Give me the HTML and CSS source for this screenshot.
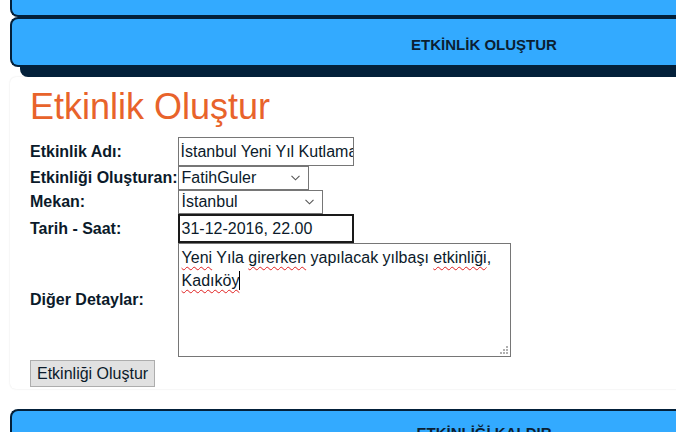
FILE: index.html
```html
<!DOCTYPE html>
<html lang="tr">
<head>
<meta charset="utf-8">
<title>Etkinlik Oluştur</title>
<link rel="stylesheet" href="styles.css">
</head>
<body>
<div class="page">
  <div class="bar bar-top"></div>
  <div class="bar bar-head">ETKİNLİK OLUŞTUR</div>
  <div class="panel">
    <h1 class="title">Etkinlik Oluştur</h1>
    <table class="form">
      <tr>
        <td class="label">Etkinlik Adı:</td>
        <td><div class="field field-name">İstanbul Yeni Yıl Kutlama</div></td>
      </tr>
      <tr>
        <td class="label">Etkinliği Oluşturan:</td>
        <td>
          <div class="select select-user">
            <span>FatihGuler</span>
            <svg class="chev" width="9" height="6" viewBox="0 0 9 6"><path d="M0.5 0.8 L4.5 4.8 L8.5 0.8" fill="none" stroke="#555" stroke-width="1.1"/></svg>
          </div>
        </td>
      </tr>
      <tr>
        <td class="label">Mekan:</td>
        <td>
          <div class="select select-place">
            <span>İstanbul</span>
            <svg class="chev" width="9" height="6" viewBox="0 0 9 6"><path d="M0.5 0.8 L4.5 4.8 L8.5 0.8" fill="none" stroke="#555" stroke-width="1.1"/></svg>
          </div>
        </td>
      </tr>
      <tr>
        <td class="label">Tarih - Saat:</td>
        <td><div class="field field-date">31-12-2016, 22.00</div></td>
      </tr>
      <tr>
        <td class="label">Diğer Detaylar:</td>
        <td>
          <div class="area">
            <div><span class="sp">Yeni</span> Yıla <span class="sp">girerken</span> yapılacak yılbaşı <span class="sp">etkinliği</span>,</div>
            <div><span class="sp">Kadıköy</span><span class="caret"></span></div>
            <svg class="grip" width="8" height="8" viewBox="0 0 8 8"><g fill="#b0b0b0"><rect x="6" y="0" width="2" height="2"/><rect x="3" y="3" width="2" height="2"/><rect x="6" y="3" width="2" height="2"/><rect x="0" y="6" width="2" height="2"/><rect x="3" y="6" width="2" height="2"/><rect x="6" y="6" width="2" height="2"/></g></svg>
          </div>
        </td>
      </tr>
    </table>
    <button class="btn" type="button">Etkinliği Oluştur</button>
  </div>
  <div class="bar bar-next">ETKİNLİĞİ KALDIR</div>
</div>
</body>
</html>
```
FILE: styles.css
```css
html, body {
  margin: 0;
  padding: 0;
  overflow: hidden;
  background: #fff;
}
body {
  font-family: Arial, "Liberation Sans", sans-serif;
  color: #0b1a2a;
}
.page {
  width: 946px;
  margin-left: 10px;
}
.bar {
  background: #33aaff;
  border: 2px solid #03203a;
  border-right: none;
  border-radius: 8px 0 0 8px;
  box-shadow: 10px 10px 0 #03203a;
  box-sizing: border-box;
  font-weight: bold;
  font-size: 15px;
  color: #0b1f33;
  text-align: center;
}
.bar-top {
  height: 17px;
  border-top: none;
  border-radius: 0 0 0 8px;
  box-shadow: none;
}
.bar-head {
  position: relative;
  height: 50px;
  line-height: 46px;
  padding-top: 3px;
}
.panel {
  margin-top: 10px;
  width: 676px;
  border-radius: 6px;
  box-shadow: 0 0 2px rgba(0, 0, 0, 0.12);
  padding: 9px 0 2px 20px;
  box-sizing: border-box;
}
.title {
  margin: 0 0 10px;
  font-weight: normal;
  font-size: 36px;
  line-height: 41px;
  color: #e8632b;
}
.form {
  border-collapse: collapse;
}
.form td {
  padding: 0;
}
.form td.label {
  width: 145px;
  font-weight: bold;
  font-size: 16px;
  vertical-align: middle;
  white-space: nowrap;
  color: #0b1a2a;
}
.field {
  box-sizing: border-box;
  height: 29px;
  font-size: 16px;
  line-height: 27px;
  padding-left: 2px;
  white-space: nowrap;
  overflow: hidden;
  color: #0b1a2a;
}
.field-name {
  width: 176px;
  border: 1px solid #767676;
}
.field-date {
  width: 176px;
  border: 2px solid #1a1a1a;
  line-height: 25px;
}
.select {
  box-sizing: border-box;
  height: 24px;
  border: 1px solid #767676;
  font-size: 16px;
  display: flex;
  align-items: center;
  justify-content: space-between;
  padding: 0 8px 0 3px;
  color: #0b1a2a;
}
.select-user { width: 131px; }
.select-place { width: 145px; }
.chev { display: block; }
.area {
  position: relative;
  box-sizing: border-box;
  width: 333px;
  height: 114px;
  border: 1px solid #767676;
  padding: 2px 3px;
  font-size: 16px;
  line-height: 23px;
  color: #0b1a2a;
}
.sp {
  text-decoration: underline wavy #e02020;
  text-decoration-thickness: 1px;
  text-underline-offset: 3px;
}
.caret {
  display: inline-block;
  width: 1px;
  height: 19px;
  background: #000;
  vertical-align: -4px;
}
.grip {
  position: absolute;
  right: 2px;
  bottom: 2px;
}
.btn {
  margin-top: 3px;
  height: 27px;
  padding: 0 6px;
  background: #e1e1e1;
  border: 1px solid #adadad;
  border-radius: 0;
  font-family: Arial, "Liberation Sans", sans-serif;
  font-size: 16px;
  color: #0b1a2a;
}
.bar-next {
  margin-top: 20px;
  height: 50px;
  line-height: 44px;
  padding-top: 0;
}
```
